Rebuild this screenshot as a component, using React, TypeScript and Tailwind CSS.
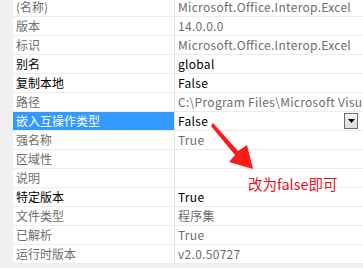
const rows: { label: string; value: string; strong?: boolean; selected?: boolean }[] = [
  { label: "(名称)", value: "Microsoft.Office.Interop.Excel" },
  { label: "版本", value: "14.0.0.0" },
  { label: "标识", value: "Microsoft.Office.Interop.Excel" },
  { label: "别名", value: "global", strong: true },
  { label: "复制本地", value: "False", strong: true },
  { label: "路径", value: "C:\\Program Files\\Microsoft Visual Studio" },
  { label: "嵌入互操作类型", value: "False", strong: true, selected: true },
  { label: "强名称", value: "True" },
  { label: "区域性", value: "" },
  { label: "说明", value: "" },
  { label: "特定版本", value: "True", strong: true },
  { label: "文件类型", value: "程序集" },
  { label: "已解析", value: "True" },
  { label: "运行时版本", value: "v2.0.50727" },
];

function Dropdown() {
  return (
    <div className="absolute right-[5px] top-[1px] w-[14px] h-[16px] border border-[#6b6b6b] bg-gradient-to-b from-[#f4f4f4] to-[#dcdcdc] flex items-center justify-center">
      <svg width="7" height="4" viewBox="0 0 7 4">
        <path d="M0 0h7L3.5 4z" fill="#000" />
      </svg>
    </div>
  );
}

export default function App() {
  return (
    <div
      className="relative w-[363px] h-[268px] overflow-hidden bg-[#f0f0f0] text-[12px] leading-none"
      style={{ fontFamily: '"Microsoft YaHei", "Noto Sans CJK SC", sans-serif' }}
    >
      <div className="mt-[-2px] ml-[13px] bg-white">
        {rows.map((r) => (
          <div key={r.label} className="flex h-[19px] border-b border-[#ececec]">
            <div
              className={
                r.selected
                  ? "w-[161px] shrink-0 flex items-center pl-[3px] bg-[#3399ff] text-white"
                  : r.strong
                    ? "w-[161px] shrink-0 flex items-center pl-[3px] text-black"
                    : "w-[161px] shrink-0 flex items-center pl-[3px] text-[#6d6d6d]"
              }
            >
              {r.label}
            </div>
            <div
              className={
                r.strong
                  ? "relative flex-1 flex items-center pl-[3px] border-l border-[#e4e4e4] text-black tracking-[0.3px] whitespace-nowrap overflow-hidden"
                  : "relative flex-1 flex items-center pl-[3px] border-l border-[#e4e4e4] text-[#6d6d6d] tracking-[0.3px] whitespace-nowrap overflow-hidden"
              }
            >
              {r.value}
              {r.selected && <Dropdown />}
            </div>
          </div>
        ))}
      </div>

      {/* annotation arrow */}
      <svg className="absolute left-0 top-0" width="363" height="268" viewBox="0 0 363 268">
        <path d="M213 123 L238 151 L247 145 L253 169 L229 162 L235 155 L211 126 Z" fill="#ff1a1a" />
      </svg>
      <span
        className="absolute left-[248px] top-[177px] text-[14.5px] leading-none text-[#e8141c]"
        style={{ fontFamily: '"SimSun", "Noto Sans CJK SC", sans-serif' }}
      >
        改为false即可
      </span>
    </div>
  );
}
